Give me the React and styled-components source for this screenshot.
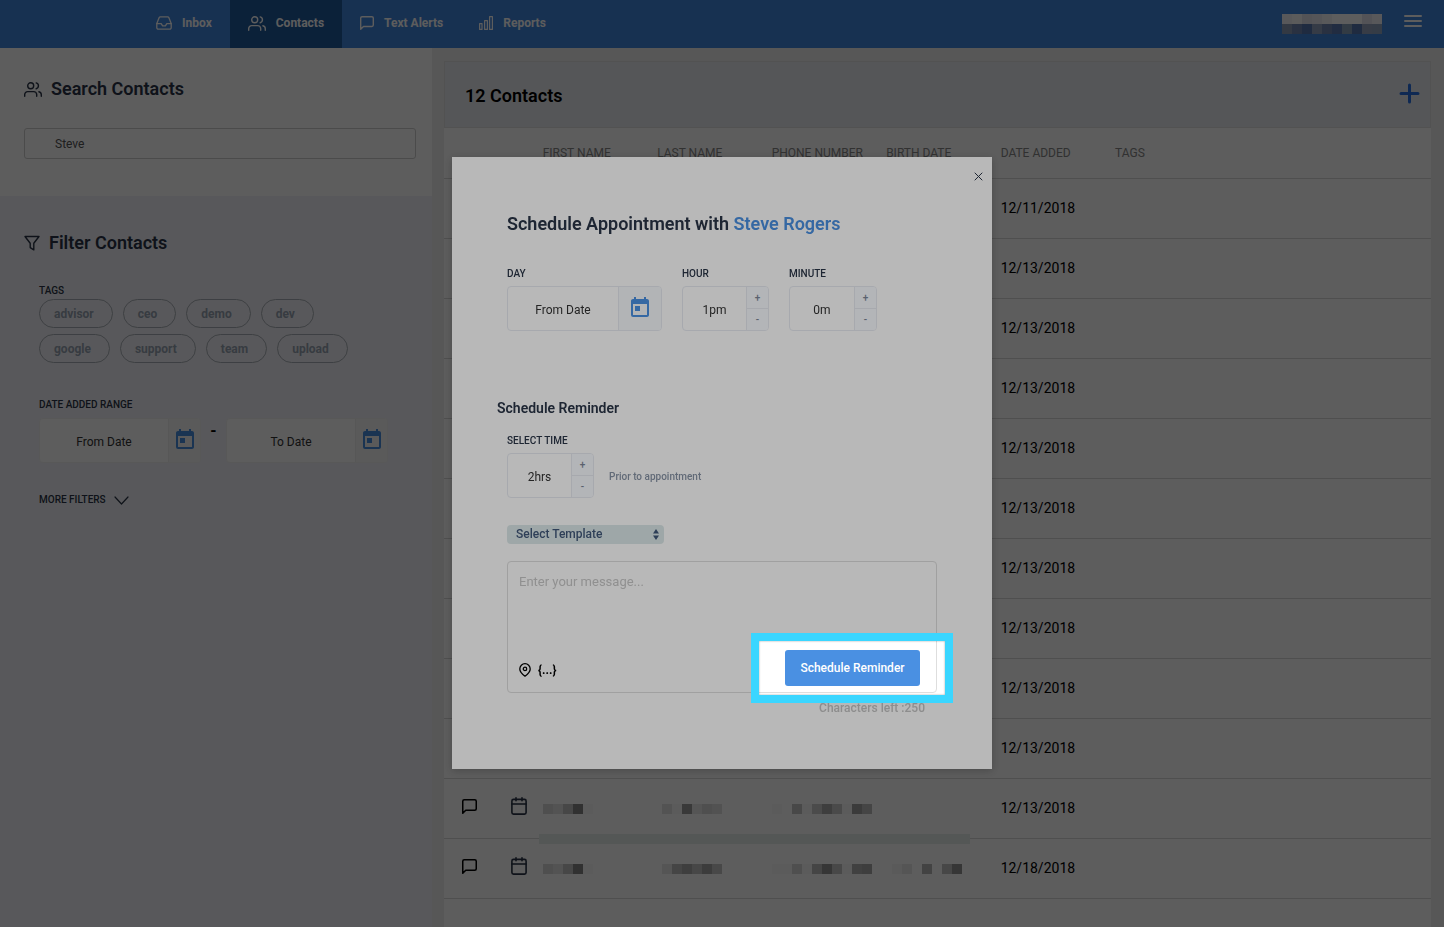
import React, {useState} from 'react';
import styled, {createGlobalStyle} from 'styled-components';
import {MdToday} from 'react-icons/md';


const GlobalStyle = createGlobalStyle`
    * {
        box-sizing: border-box;
    }
    body {
        margin: 0;
        background-color: #efefef;
    }
    body, button, input, select, textarea {
        font-family: Roboto, "Liberation Sans", sans-serif;
    }
`;

const Icon = styled.svg`
    display: block;
    flex: none;
    fill: none;
    stroke: currentColor;
    stroke-width: ${props => props.$stroke || 2};
    stroke-linecap: round;
    stroke-linejoin: round;
`;

const Page = styled.div`
    display: flex;
    flex-direction: column;
    min-height: 100vh;
`;

/* top bar */

const NavBar = styled.nav`
    display: flex;
    height: 48px;
    padding: 0 22px 0 138px;
    background-color: #4287e0;
    color: white;
`;

const NavLink = styled.a`
    display: flex;
    align-items: center;
    gap: 10px;
    padding: 0 18px 2px 18px;
    font-size: 12px;
    font-weight: 700;
    color: inherit;
    text-decoration: none;
    background-color: ${props => props.$active ? '#215b9f' : 'transparent'};
`;

const NavUser = styled.div`
    display: flex;
    align-items: flex-start;
    gap: 21px;
    margin-left: auto;
    padding-top: 14px;
`;

const IconButton = styled.button`
    display: flex;
    padding: 0;
    border: none;
    background: none;
    color: ${props => props.$color || 'inherit'};
    cursor: pointer;
`;

const Body = styled.div`
    display: flex;
    flex: 1;
`;

/* left side */

const Sidebar = styled.aside`
    flex: 0 0 432px;
    background-color: #f4f4f9;
    color: #2a3547;
`;

const SearchSection = styled.section`
    height: 148px;
    padding: 30px 16px 0 24px;
    background-color: white;
`;

const FilterSection = styled.section`
    padding: 36px 24px;
`;

const SideTitle = styled.h2`
    display: flex;
    align-items: center;
    gap: 9px;
    margin: 0;
    font-size: 18px;
    line-height: 22px;
    font-weight: 600;
`;

const SearchInput = styled.input`
    display: block;
    width: 100%;
    height: 31px;
    margin-top: 28px;
    padding: 0 30px;
    border: 1px solid #d0d0d0;
    border-radius: 3px;
    font-size: 12px;
    color: #555;
    background: none;
`;

const FilterGroup = styled.div`
    padding-left: 15px;
    margin-top: ${props => props.$top}px;
`;

const SmallLabel = styled.label`
    display: block;
    font-size: 10px;
    line-height: 12px;
    font-weight: 500;
    color: #2a3547;
`;

const TagList = styled.div`
    display: flex;
    flex-wrap: wrap;
    gap: 6px 10px;
    max-width: 330px;
    margin-top: 2px;
`;

const Tag = styled.button`
    height: 29px;
    padding: 0 18px 0 14px;
    border: 1px solid #a9afb8;
    border-radius: 15px;
    background: none;
    font-size: 12px;
    font-weight: 700;
    color: #98a5b5;
`;

const DateRange = styled.div`
    display: flex;
    margin-top: 7px;
`;

const Dash = styled.span`
    width: 25px;
    padding-top: 4px;
    text-align: center;
    font-size: 16px;
    line-height: 18px;
    font-weight: 700;
    color: black;
`;

const MoreFilters = styled.button`
    display: flex;
    align-items: center;
    gap: 8px;
    padding: 0;
    border: none;
    background: none;
    font-size: 10px;
    line-height: 12px;
    font-weight: 500;
    color: #2a3547;
`;

/* controls shared by the sidebar and the modal */

const ControlBox = styled.div`
    display: flex;
    width: ${props => props.$width}px;
    height: 45px;
    border: 1px solid ${props => props.$light ? '#f4f4f4' : '#e8ebf2'};
    border-radius: 4px;
    background-color: white;
    overflow: hidden;
`;

const ControlInput = styled.input`
    flex: 1;
    min-width: 0;
    padding: 2px 0 0 0;
    border: none;
    background: none;
    text-align: center;
    font-size: 12px;
    color: #333;
    &::placeholder {
        color: #333;
        opacity: 1;
    }
`;

const DateButton = styled.button`
    display: flex;
    align-items: center;
    justify-content: center;
    width: ${props => props.$width}px;
    padding: 0 0 2px 0;
    border: none;
    border-left: 1px solid ${props => props.$light ? '#f0f0f0' : '#e8ebf2'};
    background-color: ${props => props.$light ? '#f8f8f8' : '#f7fafd'};
    color: #4a90e2;
`;

const StepButtons = styled.div`
    display: flex;
    flex-direction: column;
    width: 22px;
    border-left: 1px solid #e8ebf2;
`;

const StepButton = styled.button`
    flex: 1;
    padding: 0;
    border: none;
    background-color: #f9fbff;
    font-size: 10px;
    line-height: 12px;
    font-weight: 500;
    color: #7c8799;
    & + & {
        border-top: 1px solid #e8ebf2;
    }
`;

/* contacts table */

const Main = styled.main`
    display: flex;
    flex: 1;
    min-width: 0;
    padding: 13px 13px 0 12px;
`;

const Card = styled.section`
    flex: 1;
    min-width: 0;
    background-color: white;
`;

const CardHeader = styled.header`
    display: flex;
    align-items: center;
    justify-content: space-between;
    height: 67px;
    padding: 2px 10px 0 20px;
    border: 1px solid #e1e1e1;
    background-color: #ebeef2;
`;

const CardTitle = styled.h1`
    margin: 0;
    font-size: 18px;
    font-weight: 600;
    color: black;
`;

const Table = styled.table`
    width: 100%;
    table-layout: fixed;
    border-collapse: collapse;
`;

const Col = styled.col`
    width: ${props => props.$width};
`;

const HeadCell = styled.th`
    height: 50px;
    padding: 0;
    border-bottom: 1px solid #dadada;
    text-align: left;
    font-size: 12px;
    font-weight: 400;
    color: #888;
`;

const Cell = styled.td`
    position: relative;
    height: 60px;
    padding: ${props => props.$icon ? '0 0 4px 18px' : '0'};
    border-bottom: 1px solid #dadada;
    font-size: 14px;
    color: black;
`;

const RedactedCell = styled(Cell)`
    padding-top: 2px;
`;

/* covers the line between the last two rows */
const RowCover = styled.div`
    position: absolute;
    z-index: 1;
    left: -4px;
    bottom: -6px;
    width: 431px;
    height: 10px;
    background-color: #e7f0ed;
`;

/* modal */

const Backdrop = styled.div`
    position: fixed;
    z-index: 10;
    inset: 0;
    display: flex;
    align-items: center;
    justify-content: center;
    padding-bottom: 1px;
    background-color: rgba(0, 0, 0, .494);
`;

const Dialog = styled.div`
    position: relative;
    width: 540px;
    padding: 56px 45px 53px 45px;
    background-color: white;
    color: #2a3547;
    box-shadow: 0 2px 8px 0 rgba(0, 0, 0, .2);
`;

const CloseButton = styled(IconButton)`
    position: absolute;
    top: 15px;
    right: 9px;
`;

const Indent = styled.div`
    padding: 0 10px;
`;

const DialogTitle = styled.h2`
    margin: 0 0 33px 0;
    font-size: 18px;
    line-height: 22px;
    font-weight: 600;
    span {
        color: #4a90e2;
    }
`;

const FieldRow = styled.div`
    display: flex;
    align-items: flex-end;
    gap: ${props => props.$gap}px;
`;

const Field = styled.div`
    display: flex;
    flex-direction: column;
    gap: 6px;
`;

const SectionTitle = styled.h3`
    margin: 68px 0 18px 0;
    font-size: 14px;
    line-height: 18px;
    font-weight: 600;
`;

const Hint = styled.span`
    padding-bottom: 15px;
    font-size: 10px;
    line-height: 12px;
    font-weight: 500;
    color: #8793a5;
`;

const SelectWrap = styled.div`
    position: relative;
    width: 157px;
    margin: 27px 0 17px 0;
    color: #41587a;
    svg {
        position: absolute;
        top: 4px;
        right: 5px;
        pointer-events: none;
    }
`;

const Select = styled.select`
    display: block;
    appearance: none;
    width: 100%;
    height: 19px;
    padding: 0 20px 1px 9px;
    border: none;
    border-radius: 4px;
    background-color: #dce8e9;
    font-size: 12px;
    font-weight: 500;
    color: inherit;
`;

const MessageBox = styled.div`
    border: 1px solid #dedede;
    border-radius: 4px;
`;

const Message = styled.textarea`
    display: block;
    width: 100%;
    height: 88px;
    padding: 12px 11px;
    border: none;
    background: none;
    resize: none;
    font-size: 13px;
    line-height: 16px;
    &::placeholder {
        color: #c8c8c8;
        opacity: 1;
    }
`;

const MessageTools = styled.div`
    display: flex;
    align-items: center;
    gap: 7px;
    padding: 0 16px 6px 11px;
    color: black;
`;

const ToolButton = styled(IconButton)`
    padding-top: 4px;
    font-size: 12px;
    font-weight: 700;
`;

const SubmitWrap = styled.div`
    position: relative;
    margin-left: auto;
`;

const SubmitButton = styled.button`
    display: block;
    width: 135px;
    height: 36px;
    padding: 0;
    border: none;
    border-radius: 3px;
    background-color: #4a90e2;
    font-size: 12px;
    font-weight: 500;
    color: white;
    cursor: pointer;
`;

/* bright frame round the button, everything outside it is dimmed */
const Spotlight = styled.div`
    position: absolute;
    z-index: 2;
    inset: -17px -33px -17px -34px;
    border: 8px solid #3ad6ff;
    box-shadow: 0 0 0 2000px rgba(0, 0, 0, .28), inset 0 0 2px 0 rgba(0, 0, 0, .4);
    pointer-events: none;
`;

const CharsLeft = styled.div`
    margin-top: 7px;
    padding-right: 12px;
    text-align: right;
    font-size: 12px;
    line-height: 16px;
    font-weight: 500;
    color: #c4c4c4;
`;


const InboxIcon = () => (
    <Icon width="16" height="14" viewBox="0 0 16 14" $stroke={1.3}>
        <path d="M15.2 7.6h-4.4L9.4 9.8H6.6L5.2 7.6H.8"/>
        <path d="M3.2 1.6.8 7.6v4.1a1.5 1.5 0 0 0 1.5 1.5h11.4a1.5 1.5 0 0 0 1.5-1.5V7.6l-2.4-6a1.3 1.3 0 0 0-1.2-.8H4.4a1.3 1.3 0 0 0-1.2.8z"/>
    </Icon>
);

const UsersIcon = () => (
    <Icon width="18" height="15" viewBox="0 0 18 15" $stroke={1.4}>
        <path d="M.7 14.2v-1.6a3 3 0 0 1 3-3h6a3 3 0 0 1 3 3v1.6"/>
        <circle cx="6.7" cy="3.8" r="3"/>
        <path d="M17.3 14.2v-1.5a3 3 0 0 0-2.4-2.9"/>
        <path d="M12.2.9a3 3 0 0 1 0 5.8"/>
    </Icon>
);

const MessageIcon = ({size}) => (
    <Icon width={size} height={size} viewBox="2 2 20 20">
        <path d="M21 15a2 2 0 0 1-2 2H7l-4 4V5a2 2 0 0 1 2-2h14a2 2 0 0 1 2 2z"/>
    </Icon>
);

const ReportsIcon = () => (
    <Icon width="14" height="14" viewBox="0 0 14 14" $stroke={1.2}>
        <rect x="0.6" y="7.6" width="2.4" height="5.8"/>
        <rect x="5.6" y="4.6" width="2.8" height="8.8"/>
        <rect x="10.6" y="0.6" width="2.8" height="12.8"/>
    </Icon>
);

const FilterIcon = () => (
    <Icon width="16" height="16" viewBox="0 0 16 16" $stroke={1.4}>
        <path d="M1 1.5h14L9.8 8.3v6.6L6.2 12.6V8.3z"/>
    </Icon>
);

const CalendarIcon = () => (
    <Icon width="16" height="18" viewBox="0 0 16 18" $stroke={1.6}>
        <rect x="0.9" y="2.4" width="14.2" height="14.7" rx="1.6"/>
        <path d="M1 7h14M5 0.8v3M11 0.8v3"/>
    </Icon>
);

const PinIcon = () => (
    <Icon width="12" height="14" viewBox="0 0 12 14" $stroke={1.3}>
        <path d="M11.2 5.9C11.2 9.4 6 13.2 6 13.2S.8 9.4.8 5.9a5.2 5.2 0 0 1 10.4 0z"/>
        <circle cx="6" cy="5.9" r="1.7"/>
    </Icon>
);

/* blurred out values, one grey level per 10px block */
const Redacted = ({start = 0, shades}) => (
    <svg width={start + shades.length * 10} height="10" style={{display: 'block'}} aria-hidden="true">
        {shades.map((s, i) => (
            <rect key={i} x={start + i * 10} width="10" height="10" fill={`rgb(${s}, ${s}, ${s})`}/>
        ))}
    </svg>
);

const USER_BLOCKS = [
    ['#f2f4f8', '#fafafc', '#e4e6ee', '#e9ebf2', '#f6f6f8', '#fff', '#fff', '#fff', '#e4e6f0', '#f2f4f8'],
    ['#8d9cbb', '#7188b4', '#5677b0', '#93a4c0', '#7188b4', '#5d7bb2', '#8ba3bd', '#5677b0', '#98a7c0', '#93a6c0'],
];

const FIRST = [217, 230, 195, 137, 252];
const LAST_A = [228, 250, 159, 234, 217, 225];
const LAST_B = [234, 190, 173, 195, 167, 198];
const PHONE_A = [252, 255, 198, 250, 206, 173, 203, 250, 162, 190];
const PHONE_B = [250, 252, 217, 250, 190, 148, 200, 250, 180, 173];
const BIRTH = [247, 234, 255, 187, 255, 195, 148];

const contacts = [
    {date: '12/11/2018'},
    ...Array.from({length: 9}, () => ({date: '12/13/2018'})),
    {date: '12/13/2018', cover: true},
    {date: '12/18/2018', last: LAST_B, phone: PHONE_B, birth: BIRTH},
];

const tags = ['advisor', 'ceo', 'demo', 'dev', 'google', 'support', 'team', 'upload'];


const DateControl = ({id, label, width, iconWidth, light}) => (
    <ControlBox $width={width} $light={light}>
        <ControlInput id={id} placeholder={label} aria-label={label}/>
        <DateButton $width={iconWidth} $light={light} aria-label="Open calendar">
            <MdToday size={24}/>
        </DateButton>
    </ControlBox>
);

const Stepper = ({id, label, value, width, format, onChange}) => (
    <Field>
        <SmallLabel htmlFor={id}>{label}</SmallLabel>
        <ControlBox $width={width}>
            <ControlInput id={id} value={format(value)} readOnly/>
            <StepButtons>
                <StepButton onClick={() => onChange(value + 1)}>+</StepButton>
                <StepButton onClick={() => onChange(Math.max(0, value - 1))}>-</StepButton>
            </StepButtons>
        </ControlBox>
    </Field>
);

const TopNav = () => (
    <NavBar>
        <NavLink href="#inbox"><InboxIcon/>Inbox</NavLink>
        <NavLink href="#contacts" $active><UsersIcon/>Contacts</NavLink>
        <NavLink href="#alerts"><MessageIcon size={14}/>Text Alerts</NavLink>
        <NavLink href="#reports"><ReportsIcon/>Reports</NavLink>
        <NavUser>
            <svg width="100" height="20" aria-hidden="true">
                {USER_BLOCKS.map((row, y) => row.map((fill, x) => (
                    <rect key={`${x}-${y}`} x={x * 10} y={y * 10} width="10" height="10" fill={fill}/>
                )))}
            </svg>
            <IconButton aria-label="Menu">
                <Icon width="19" height="14" viewBox="0 0 19 14">
                    <path d="M2 2h16M2 7h16M2 12h16"/>
                </Icon>
            </IconButton>
        </NavUser>
    </NavBar>
);

const Filters = () => (
    <Sidebar>
        <SearchSection>
            <SideTitle><UsersIcon/>Search Contacts</SideTitle>
            <SearchInput aria-label="Search contacts" defaultValue="Steve"/>
        </SearchSection>
        <FilterSection>
            <SideTitle><FilterIcon/>Filter Contacts</SideTitle>
            <FilterGroup $top={31}>
                <SmallLabel as="div">TAGS</SmallLabel>
                <TagList>
                    {tags.map(tag => <Tag key={tag}>{tag}</Tag>)}
                </TagList>
            </FilterGroup>
            <FilterGroup $top={36}>
                <SmallLabel htmlFor="range-from">DATE ADDED RANGE</SmallLabel>
                <DateRange>
                    <DateControl id="range-from" label="From Date" width={162} iconWidth={32} light/>
                    <Dash>-</Dash>
                    <DateControl id="range-to" label="To Date" width={162} iconWidth={32} light/>
                </DateRange>
            </FilterGroup>
            <FilterGroup $top={31}>
                <MoreFilters>
                    MORE FILTERS
                    <Icon width="15" height="9" viewBox="0 0 15 9" $stroke={1.2}>
                        <path d="M1 1l6.5 7L14 1"/>
                    </Icon>
                </MoreFilters>
            </FilterGroup>
        </FilterSection>
    </Sidebar>
);

const ContactsTable = () => (
    <Card>
        <CardHeader>
            <CardTitle>12 Contacts</CardTitle>
            <IconButton $color="#2a74e6" aria-label="Add contact">
                <Icon width="21" height="25" viewBox="0 0 21 25" $stroke={3}>
                    <path d="M2 10.5h17M10.5 2v17"/>
                </Icon>
            </IconButton>
        </CardHeader>
        <Table>
            <colgroup>
                <Col $width="5%"/>
                <Col $width="5%"/>
                <Col $width="11.6%"/>
                <Col $width="11.6%"/>
                <Col $width="11.6%"/>
                <Col $width="11.6%"/>
                <Col $width="11.6%"/>
                <Col/>
            </colgroup>
            <thead>
                <tr>
                    <HeadCell/>
                    <HeadCell/>
                    <HeadCell>FIRST NAME</HeadCell>
                    <HeadCell>LAST NAME</HeadCell>
                    <HeadCell>PHONE NUMBER</HeadCell>
                    <HeadCell>BIRTH DATE</HeadCell>
                    <HeadCell>DATE ADDED</HeadCell>
                    <HeadCell>TAGS</HeadCell>
                </tr>
            </thead>
            <tbody>
                {contacts.map((c, index) => (
                    <tr key={index}>
                        <Cell $icon>
                            <IconButton aria-label="Send text"><MessageIcon size={15}/></IconButton>
                        </Cell>
                        <Cell $icon>
                            <IconButton $color="#2a3547" aria-label="Schedule"><CalendarIcon/></IconButton>
                        </Cell>
                        <RedactedCell>
                            <Redacted shades={FIRST}/>
                            {c.cover ? <RowCover/> : null}
                        </RedactedCell>
                        <RedactedCell><Redacted start={5} shades={c.last || LAST_A}/></RedactedCell>
                        <RedactedCell><Redacted shades={c.phone || PHONE_A}/></RedactedCell>
                        <RedactedCell>{c.birth ? <Redacted start={6} shades={c.birth}/> : null}</RedactedCell>
                        <Cell>{c.date}</Cell>
                        <Cell/>
                    </tr>
                ))}
            </tbody>
        </Table>
    </Card>
);

const ScheduleDialog = ({onClose}) => {
    const [hour, setHour] = useState(1);
    const [minute, setMinute] = useState(0);
    const [prior, setPrior] = useState(2);
    const [message, setMessage] = useState('');

    return (
        <Backdrop>
            <Dialog role="dialog" aria-labelledby="dialog-title">
                <CloseButton onClick={onClose} aria-label="Close">
                    <Icon width="9" height="9" viewBox="0 0 9 9" $stroke={1}>
                        <path d="M1 1l7 7M8 1L1 8"/>
                    </Icon>
                </CloseButton>
                <Indent>
                    <DialogTitle id="dialog-title">Schedule Appointment with <span>Steve Rogers</span></DialogTitle>
                    <FieldRow $gap={20}>
                        <Field>
                            <SmallLabel htmlFor="day">DAY</SmallLabel>
                            <DateControl id="day" label="From Date" width={155} iconWidth={43}/>
                        </Field>
                        <Stepper id="hour" label="HOUR" width={87} value={hour} format={v => `${v}pm`} onChange={setHour}/>
                        <Stepper id="minute" label="MINUTE" width={88} value={minute} format={v => `${v}m`} onChange={setMinute}/>
                    </FieldRow>
                </Indent>
                <SectionTitle>Schedule Reminder</SectionTitle>
                <Indent>
                    <FieldRow $gap={15}>
                        <Stepper id="prior" label="SELECT TIME" width={87} value={prior} format={v => `${v}hrs`} onChange={setPrior}/>
                        <Hint>Prior to appointment</Hint>
                    </FieldRow>
                    <SelectWrap>
                        <Select aria-label="Template">
                            <option>Select Template</option>
                        </Select>
                        <svg width="6" height="11" viewBox="0 0 6 11" fill="currentColor">
                            <path d="M3 0l3 4.5H0zM3 11l3-4.5H0z"/>
                        </svg>
                    </SelectWrap>
                    <MessageBox>
                        <Message
                            aria-label="Message"
                            placeholder="Enter your message..."
                            value={message}
                            onChange={e => setMessage(e.target.value)}
                        />
                        <MessageTools>
                            <ToolButton aria-label="Add location"><PinIcon/></ToolButton>
                            <ToolButton aria-label="Insert field">{'{...}'}</ToolButton>
                            <SubmitWrap>
                                <SubmitButton>Schedule Reminder</SubmitButton>
                                <Spotlight/>
                            </SubmitWrap>
                        </MessageTools>
                    </MessageBox>
                    <CharsLeft>Characters left :{250 - message.length}</CharsLeft>
                </Indent>
            </Dialog>
        </Backdrop>
    );
};

const App = () => {
    const [showDialog, setShowDialog] = useState(true);

    return (
        <Page>
            <GlobalStyle/>
            <TopNav/>
            <Body>
                <Filters/>
                <Main>
                    <ContactsTable/>
                </Main>
            </Body>
            {showDialog ? <ScheduleDialog onClose={() => setShowDialog(false)}/> : null}
        </Page>
    );
};

export default App;
